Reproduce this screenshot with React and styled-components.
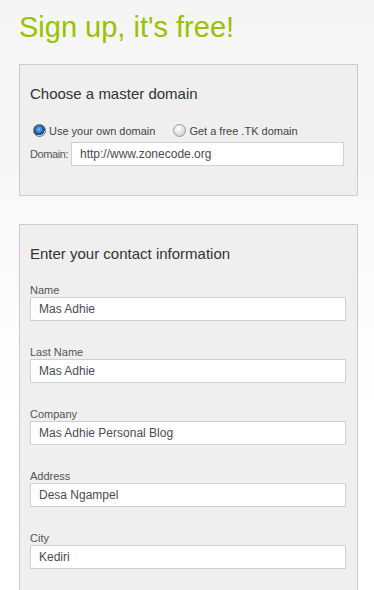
import React from 'react'
import styled, { createGlobalStyle } from 'styled-components'

const GlobalStyle = createGlobalStyle`
  html, body {
    margin: 0;
    padding: 0;
    overflow: hidden;
  }
  body {
    font-family: "Liberation Sans", Arial, sans-serif;
    background: linear-gradient(#f5f5f5 0, #f7f7f7 160px, #ffffff 420px);
    min-height: 590px;
  }
`

const Page = styled.div`
  padding: 10px 16px 0 19px;
`

const Title = styled.h1`
  margin: 0 0 20px;
  font-size: 29px;
  line-height: 34px;
  font-weight: normal;
  color: #99c200;
`

const Panel = styled.div`
  background: #efefef;
  border: 1px solid #cccccc;
  padding: ${(p) => p.$pad};
  margin-bottom: 28px;
`

const Heading = styled.h2`
  margin: 0;
  font-size: 15px;
  line-height: 18px;
  font-weight: normal;
  color: #333333;
`

const RadioRow = styled.div`
  display: flex;
  align-items: center;
  gap: 18px;
  margin-top: 21px;
  height: 13px;
`

const RadioOption = styled.label`
  display: flex;
  align-items: center;
  gap: 3px;
  font-size: 11px;
  color: #444444;
  &:first-child {
    margin-left: 3px;
  }
`

const Radio = styled.input.attrs({ type: 'radio' })`
  appearance: none;
  margin: 0;
  width: 13px;
  height: 13px;
  border-radius: 50%;
  border: 1px solid #9a9a9a;
  box-sizing: border-box;
  background: radial-gradient(circle at 40% 35%, #ffffff 0, #e6e6e6 45%, #c4c4c4 100%);
  &:checked {
    border-color: #6f6f6f;
    background:
      radial-gradient(circle at 45% 40%, #7fc1f0 0, #2a7cc4 35%, #0c3f75 62%, transparent 66%),
      radial-gradient(circle, #f0f0f0 0, #d6d6d6 100%);
  }
`

const DomainRow = styled.div`
  display: flex;
  align-items: center;
  margin-top: 5px;
`

const InlineLabel = styled.span`
  flex: none;
  width: 41px;
  font-size: 11px;
  letter-spacing: -0.4px;
  color: #555555;
`

const Field = styled.div`
  margin-top: ${(p) => p.$top}px;
`

const Label = styled.label`
  display: block;
  font-size: 11px;
  line-height: 13px;
  color: #555555;
`

const TextInput = styled.input`
  box-sizing: border-box;
  display: block;
  width: 100%;
  height: 24px;
  margin: 0;
  padding: 0 8px;
  border: 1px solid #d0d0d0;
  background: #ffffff;
  font-family: "Liberation Sans", Arial, sans-serif;
  font-size: 12px;
  color: #4a4a55;
  outline: none;
`

const DomainInput = styled(TextInput)`
  flex: 1;
  width: auto;
`

const contactFields = [
  { label: 'Name', value: 'Mas Adhie' },
  { label: 'Last Name', value: 'Mas Adhie' },
  { label: 'Company', value: 'Mas Adhie Personal Blog' },
  { label: 'Address', value: 'Desa Ngampel' },
  { label: 'City', value: 'Kediri' },
]

export default function App() {
  return (
    <>
      <GlobalStyle />
      <Page>
        <Title>Sign up, it's free!</Title>

        <Panel $pad="20px 13px 29px 10px">
          <Heading>Choose a master domain</Heading>
          <RadioRow>
            <RadioOption>
              <Radio name="domain" defaultChecked />
              Use your own domain
            </RadioOption>
            <RadioOption>
              <Radio name="domain" />
              Get a free .TK domain
            </RadioOption>
          </RadioRow>
          <DomainRow>
            <InlineLabel>Domain:</InlineLabel>
            <DomainInput defaultValue="http://www.zonecode.org" />
          </DomainRow>
        </Panel>

        <Panel $pad="20px 11px 30px 10px">
          <Heading>Enter your contact information</Heading>
          {contactFields.map((f, i) => (
            <Field key={f.label} $top={i === 0 ? 21 : 25}>
              <Label>{f.label}</Label>
              <TextInput defaultValue={f.value} />
            </Field>
          ))}
        </Panel>
      </Page>
    </>
  )
}
